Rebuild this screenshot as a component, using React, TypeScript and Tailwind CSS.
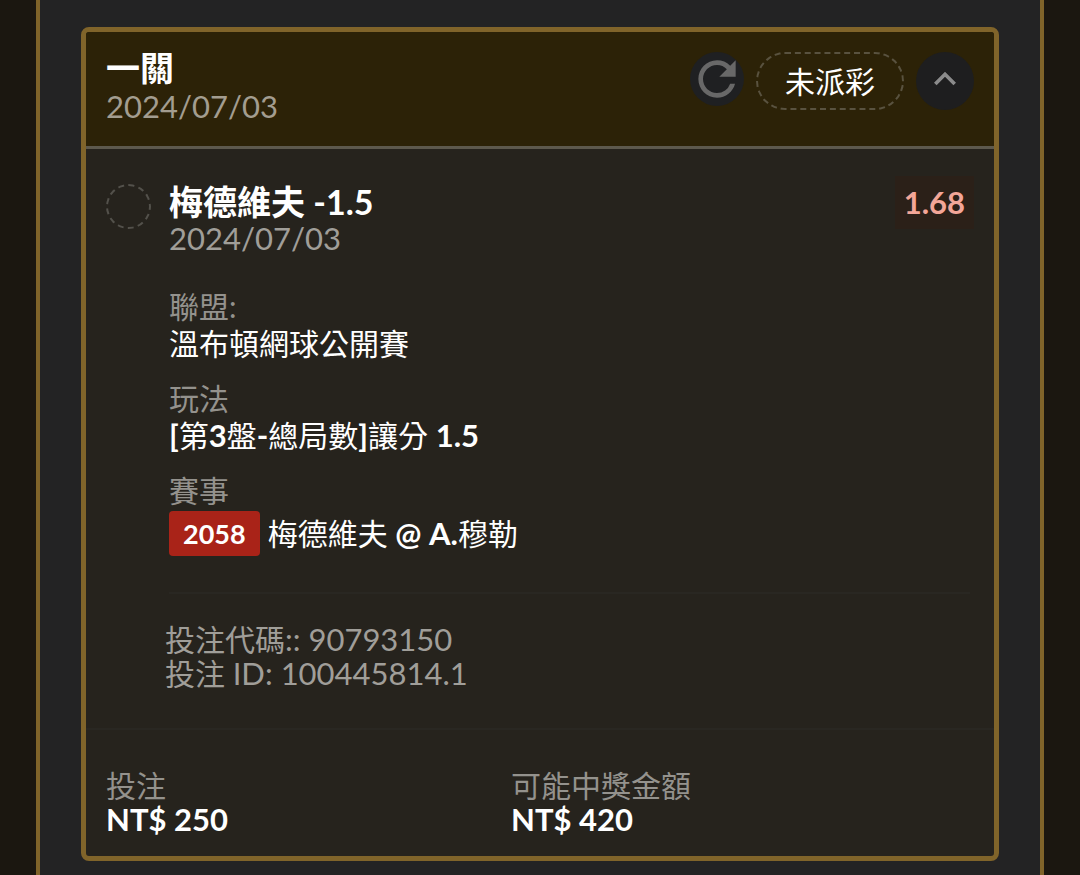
import { useState } from 'react';
import type { ReactNode } from 'react';
import { MdExpandLess, MdRefresh } from 'react-icons/md';
import clsx from 'clsx';

const BET = {
  title: '一關',
  date: '2024/07/03',
  status: '未派彩',
  code: '90793150',
  id: '100445814.1',
};

// Latin text and digits run slightly larger than the Chinese around them
function Latin({ bold = false, children }: { bold?: boolean; children: ReactNode }) {
  return <span className={clsx('text-[31px]', bold && 'font-bold')}>{children}</span>;
}

function Detail({ label, children }: { label: string; children: ReactNode }) {
  return (
    <div>
      <dt className="text-[#94928d]">{label}</dt>
      <dd className="text-white">{children}</dd>
    </div>
  );
}

function BetHeader({ open, onToggle }: { open: boolean; onToggle: () => void }) {
  return (
    <header className="flex items-start justify-between border-b-3 border-[#5d594d] bg-[#2c2207] pt-[17px] pr-5 pb-[21px] pl-5">
      <div className="leading-[38px]">
        <h1 className="text-[34px] font-bold text-white">{BET.title}</h1>
        <p className="text-[31px] text-[#a39d90]">{BET.date}</p>
      </div>
      <div className="flex items-start gap-3 pt-[3px]">
        <button
          type="button"
          aria-label="重新整理"
          className="flex size-[54px] items-center justify-center rounded-full bg-[#1f2022] text-[#686868]"
        >
          <MdRefresh className="size-14 shrink-0" />
        </button>
        <span className="flex h-[58px] items-center rounded-full border-2 border-dashed border-[#59523f] px-[27px] text-[30px] text-white">
          {BET.status}
        </span>
        <button
          type="button"
          aria-label="收合"
          aria-expanded={open}
          onClick={onToggle}
          className="flex size-[58px] items-center justify-center rounded-full bg-[#1e1e1f] pb-1 text-[#8b8b8b]"
        >
          <MdExpandLess className={clsx('size-11', !open && 'rotate-180')} />
        </button>
      </div>
    </header>
  );
}

function Selection() {
  return (
    <section className="flex items-start gap-[18px] pt-[27px] pr-5 pb-[38px] pl-5">
      <div className="mt-2 size-[45px] shrink-0 rounded-full border-2 border-dashed border-[#53514b]" />
      <div className="min-w-0 flex-1">
        <div className="flex items-start justify-between">
          <div className="pt-[7px] leading-[37px]">
            <h2 className="text-[34px] font-bold text-white">梅德維夫 -1.5</h2>
            <p className="text-[31px] text-[#a09e99]">{BET.date}</p>
          </div>
          <span className="bg-[#2b2018] px-[9px] text-[31px] leading-[53px] font-bold text-[#f3a698]">1.68</span>
        </div>

        <dl className="mt-[31px] flex flex-col gap-[18px] leading-[37px]">
          <Detail label="聯盟:">溫布頓網球公開賽</Detail>
          <Detail label="玩法">
            <Latin bold>[</Latin>第<Latin bold>3</Latin>盤<Latin bold>-</Latin>總局數<Latin bold>]</Latin>讓分{' '}
            <Latin bold>1.5</Latin>
          </Detail>
          <Detail label="賽事">
            <div className="flex items-center gap-2 pt-[2px]">
              <span className="rounded-sm bg-[#a92318] px-[14px] text-[27px] leading-[45px] font-bold">2058</span>
              <span>
                梅德維夫 <Latin bold>@ A.</Latin>穆勒
              </span>
            </div>
          </Detail>
        </dl>

        <div className="mt-9 mr-1 border-t-2 border-[#292722]" />

        <div className="-ml-1 pt-7 leading-[34px] text-[#a09e99]">
          <p>投注代碼<Latin>:: {BET.code}</Latin></p>
          <p>投注 <Latin>ID: {BET.id}</Latin></p>
        </div>
      </div>
    </section>
  );
}

function Stakes() {
  const stakes = [
    { label: '投注', value: 'NT$ 250' },
    { label: '可能中獎金額', value: 'NT$ 420' },
  ];

  return (
    <dl className="grid grid-cols-[7fr_8fr] border-t-2 border-[#292722] px-5 pt-[38px] pb-5 leading-[34px]">
      {stakes.map(s => (
        <div key={s.label}>
          <dt className="text-[#94928d]">{s.label}</dt>
          <dd className="text-[31px] font-bold text-white">{s.value}</dd>
        </div>
      ))}
    </dl>
  );
}

export default function App() {
  const [open, setOpen] = useState(true);

  return (
    <div className="min-h-screen bg-[#1b1710] px-9 font-['Lato','Noto_Sans_CJK_TC',sans-serif] text-[30px]">
      <main className="min-h-screen border-x-4 border-[#80642a] bg-[#232324] px-[41px] pt-[27px] pb-[14px]">
        <article className="overflow-hidden rounded-lg border-5 border-[#80642a] bg-[#26231d]">
          <BetHeader open={open} onToggle={() => setOpen(!open)} />
          {open && <Selection />}
          <Stakes />
        </article>
      </main>
    </div>
  );
}
